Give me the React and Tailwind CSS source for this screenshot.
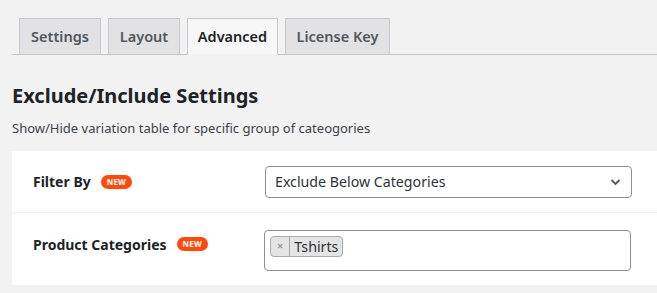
import { useState } from "react";

const font = { fontFamily: '"Noto Sans", "Open Sans", sans-serif' };

function NewBadge() {
  return (
    <span className="ml-[10px] inline-flex h-[14px] items-center rounded-full bg-[#ff4a0e] px-[6px] text-[8px] font-bold leading-none tracking-[0.2px] text-white">
      NEW
    </span>
  );
}

export default function App() {
  const [tab, setTab] = useState("Advanced");
  const tabs = [
    ["Settings", "w-[82px]"],
    ["Layout", "w-[72px]"],
    ["Advanced", "w-[91px]"],
    ["License Key", "w-[105px]"],
  ];

  return (
    <div className="h-[293px] w-full overflow-hidden bg-[#f2f2f3] pl-[12px] pt-[18px] text-[#1d2327]" style={font}>
      {/* Tabs */}
      <div className="flex items-end gap-[7px] border-b border-[#c3c4c7] pl-[7px]">
        {tabs.map(([t, w]) => (
          <button
            key={t}
            onClick={() => setTab(t)}
            className={`-mb-px h-[37px] ${w} border border-[#c8c8cb] text-[14.5px] font-semibold leading-none ${
              tab === t
                ? "border-b-[#f2f2f3] bg-[#f7f7f7] text-[#1d2327]"
                : "bg-[#e2e2e4] text-[#50575e]"
            }`}
          >
            {t}
          </button>
        ))}
      </div>

      {/* Section heading */}
      <h2 className="mt-[29px] text-[20px] font-bold leading-[24px] text-[#1d2327]">Exclude/Include Settings</h2>
      <p className="mt-[12px] text-[13px] leading-[16px] text-[#3c434a]">
        Show/Hide variation table for specific group of cateogories
      </p>

      {/* Options table */}
      <div className="mt-[15px] bg-white">
        <div className="flex h-[62px] items-center border-b border-[#f0f0f1]">
          <div className="flex w-[253px] items-center pl-[21px] text-[14px] font-bold">
            Filter By <NewBadge />
          </div>
          <div className="relative flex h-[32px] w-[367px] items-center rounded-[4px] border border-[#8c8f94] pl-[9px] text-[14.2px] text-[#2c3338]">
            Exclude Below Categories
            <svg className="absolute right-[10px] top-[11px]" width="11" height="8" viewBox="0 0 11 8">
              <path d="M1.5 2 L5.5 6 L9.5 2" fill="none" stroke="#50575e" strokeWidth="1.8" />
            </svg>
          </div>
        </div>
        <div className="flex h-[72px] items-start pt-[17px]">
          <div className="mt-[4px] flex h-[20px] w-[252px] items-center pl-[21px] text-[14px] font-bold">
            Product Categories <NewBadge />
          </div>
          <div className="flex h-[41px] w-[367px] items-start rounded-[4px] border border-[#8c8f94] px-[5px] pt-[5px]">
            <span className="flex h-[21px] items-center rounded-[4px] border border-[#aaaaaa] bg-[#e4e4e4] text-[14.2px] text-[#2c3338]">
              <span className="flex h-full items-center border-r border-[#aaaaaa] px-[6px] text-[11px] font-bold text-[#999]">×</span>
              <span className="px-[4px]">Tshirts</span>
            </span>
          </div>
        </div>
      </div>
    </div>
  );
}
